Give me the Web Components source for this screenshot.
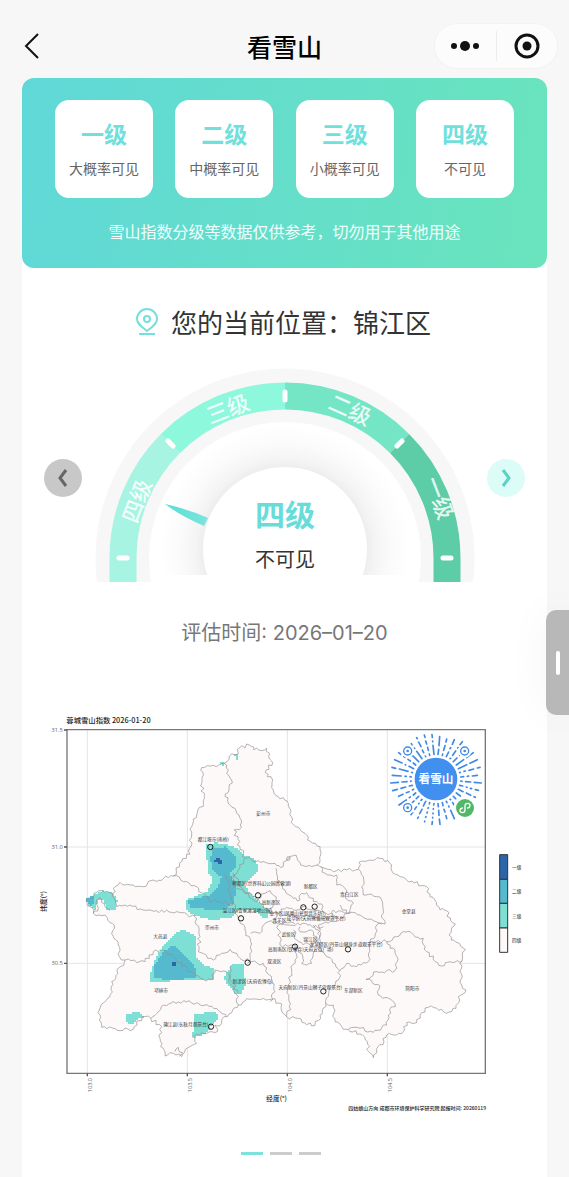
<!DOCTYPE html>
<html lang="zh-CN">
<head>
<meta charset="utf-8">
<meta name="viewport" content="width=device-width, initial-scale=1">
<title>看雪山</title>
<style>
  html, body { margin: 0; }
  body { background: #f7f7f7; font-family: "Noto Sans CJK SC", "Noto Sans", sans-serif; color: #333; }
</style>
</head>
<body>
<snow-app></snow-app>
<script>
const define = (name, html, setup) => {
  const template = document.createElement('template');
  template.innerHTML = html;
  customElements.define(name, class extends HTMLElement {
    constructor() {
      super();
      this.attachShadow({ mode: 'open' }).append(template.content.cloneNode(true));
    }
    connectedCallback() { if (setup) setup(this.shadowRoot, this); }
  });
};

/* Seeded generator, so that coastlines and code rays are stable between loads. */
const seeded = seed => () => {
  seed = (seed * 1103515245 + 12345) % 2147483648;
  return seed / 2147483648;
};

define('nav-bar', `
<style>
  :host { display: grid; grid-template-columns: 1fr auto 1fr; align-items: center; box-sizing: border-box; height: 78px; padding: 14px 11px 0; }
  button { border: 0; background: none; padding: 0; display: grid; place-items: center; cursor: pointer; }
  .back { width: 42px; height: 40px; }
  h1 { margin: 0; font-size: 25px; line-height: 38px; font-weight: 500; color: #000; }
  .capsule { justify-self: end; display: grid; grid-template-columns: 1fr 1px 1fr; align-items: center; width: 124px; height: 46px; border-radius: 24px; background: #fcfcfc; border: 1px solid #f3f3f3; box-sizing: border-box; }
  .capsule button { height: 44px; }
  .capsule i { height: 30px; background: #ececec; }
</style>
<button class="back" aria-label="返回"><svg width="20" height="30" viewBox="0 0 20 30" fill="none" stroke="#111" stroke-width="2"><path d="M16 3 4 15l12 12"/></svg></button>
<h1><slot></slot></h1>
<div class="capsule">
  <button aria-label="更多"><svg width="30" height="12" viewBox="0 0 30 12" fill="#111"><circle cx="4" cy="6" r="3"/><circle cx="15" cy="6" r="5"/><circle cx="26" cy="6" r="3"/></svg></button>
  <i></i>
  <button aria-label="关闭"><svg width="28" height="28" viewBox="0 0 28 28"><circle cx="14" cy="14" r="11" fill="none" stroke="#111" stroke-width="3"/><circle cx="14" cy="14" r="4.500" fill="#111"/></svg></button>
</div>`);

define('level-card', `
<style>
  :host { display: flex; flex-direction: column; align-items: center; box-sizing: border-box; width: 98px; height: 98px; padding-top: 15px; border-radius: 14px; background: #fff; }
  strong { font-size: 23px; line-height: 36px; font-weight: 700; color: #6fe0dc; }
  span { margin-top: 7px; font-size: 14px; line-height: 20px; color: #666; white-space: nowrap; }
</style>
<strong><slot name="level"></slot></strong><span><slot></slot></span>`);

define('level-banner', `
<style>
  :host { display: block; box-sizing: border-box; padding: 22px 33px 25px; border-radius: 12px; background: linear-gradient(98deg, #60d8d8, #69e4bc); }
  .row { display: flex; justify-content: space-between; }
  p { margin: 21px 0 0; font-size: 16px; line-height: 24px; text-align: center; color: #f0fffc; }
</style>
<div class="row"><slot></slot></div><p><slot name="note"></slot></p>`);

define('place-line', `
<style>
  :host { display: flex; align-items: center; justify-content: center; gap: 11px; }
  h2 { margin: 0; font-size: 26px; line-height: 36px; font-weight: 400; color: #333; }
</style>
<svg width="26" height="28" viewBox="0 0 26 28" fill="none" stroke="#74e0dc" stroke-width="2"><path d="M13 23C8 19 3 16 3 11a10 10 0 0 1 20 0c0 5-5 8-10 12Z"/><circle cx="13" cy="11" r="3"/><path d="M5 26h16"/></svg>
<h2><slot></slot></h2>`);

define('level-gauge', `
<style>
  :host { display: grid; grid-template-columns: 38px minmax(0, 380px) 38px; justify-content: space-between; align-items: center; padding: 0 22px; }
  button { width: 38px; height: 38px; border: 0; border-radius: 50%; padding: 0; display: grid; place-items: center; background: #c8c8c8; color: #666; margin-top: 6px; }
  .next { background: #dcfcf7; color: #5ad2c6; }
  svg { display: block; }
  .dial { width: 100%; }
  text { text-anchor: middle; }
  .band text { font-size: 22px; font-weight: 500; fill: #fff; fill-opacity: .85; }
</style>
<button aria-label="上一个"><svg width="14" height="20" viewBox="0 0 14 20" fill="none" stroke="currentColor" stroke-width="3"><path d="M10 2 4 10l6 8"/></svg></button>
<svg class="dial" viewBox="0 0 380 214">
  <defs>
    <radialGradient id="shade" gradientUnits="userSpaceOnUse" cx="190" cy="181" r="136">
      <stop offset=".58" stop-color="#ebebeb"/><stop offset=".66" stop-color="#f4f4f4"/><stop offset=".78" stop-color="#fbfbfb"/><stop offset=".92" stop-color="#fff"/>
    </radialGradient>
    <linearGradient id="needle"><stop offset="0" stop-color="#55e0d0"/><stop offset="1" stop-color="#7fe3e0"/></linearGradient>
    <clipPath id="cut"><path d="M0 0h380v214H0z"/></clipPath>
    <clipPath id="face"><path d="M0 0h380v207H0z"/></clipPath>
  </defs>
  <g clip-path="url(#cut)">
    <circle cx="190" cy="190" r="189.500" fill="#f7f7f7"/>
    <g fill="none" stroke-width="27" class="arcs">
      <path d="M28 214V190A162 162 0 0 1 75.450 75.450" stroke="#a6f4e1"/>
      <path d="M75.450 75.450A162 162 0 0 1 190 28" stroke="#8df8dc"/>
      <path d="M190 28A162 162 0 0 1 304.550 75.450" stroke="#74e6c5"/>
      <path d="M304.550 75.450A162 162 0 0 1 352 190V214" stroke="#5dcda8"/>
    </g>
    <circle cx="190" cy="190" r="136" fill="#fff"/>
  </g>
  <g clip-path="url(#face)">
    <circle cx="190" cy="190" r="134" fill="url(#shade)"/>
    <path d="M70 136q23 5 43 14l-4 8Q84 147 70 136z" fill="url(#needle)"/>
    <circle cx="190" cy="181" r="82" fill="#fff"/>
  </g>
  <g stroke="#fff" stroke-width="5" stroke-linecap="round">
    <path d="M24 190h8M348 190h8M190 24v8M73 73l5 5M307 73l-5 5"/>
  </g>
  <g class="band">
    <text transform="translate(42 133) rotate(-69)" y="8">四级</text>
    <text transform="translate(133 41) rotate(-21)" y="8">三级</text>
    <text transform="translate(255 42) rotate(24)" y="8">二级</text>
    <text transform="translate(344 130) rotate(69)" y="8">一级</text>
  </g>
  <text x="190" y="158" font-size="30" font-weight="700" fill="#67dcd8">四级</text>
  <text x="190" y="199" font-size="20" fill="#333">不可见</text>
</svg>
<button class="next" aria-label="下一个"><svg width="14" height="20" viewBox="0 0 14 20" fill="none" stroke="currentColor" stroke-width="3"><path d="m4 2 6 8-6 8"/></svg></button>`);

/* Map units are thirds of a pixel. Every outline is digitised on a tile; a tile is only an origin. */
const TILE = { nw: [90, 2100], ne: [840, 2100], sw: [90, 2700], se: [840, 2700], mid: [570, 2490] };
const pts = spec => {
  const out = [];
  let tile = TILE.nw;
  for (const word of spec.trim().split(/\s+/)) {
    if (TILE[word]) tile = TILE[word];
    else { const [x, y] = word.split(',').map(Number); out.push([x + tile[0], y + tile[1]]); }
  }
  return out;
};
const OUTLINE = `nw 515,203 550,196 582,190 598,168 615,165 630,142 658,135 672,150 710,145 716,170 728,188 708,210 712,230 728,240 730,270 745,290 775,310 ne 34,350 40,374 75,400 90,424 120,440 122,465 112,495
 135,505 160,515 200,510 235,508 237,487 260,483 300,475 335,495 340,520 380,540 440,560 450,590 465,600 480,630 se 500,32 512,62 526,72 513,98 513,120 540,132 556,150 545,182 545,255 558,270 535,290 528,325 500,340 485,328 445,322 420,345 410,368 380,368 370,395 350,405 320,405 312,425 294,440 280,473 266,455 262,425 240,402 205,388 185,380 165,365 160,315 137,310 115,362 95,378 55,355 20,350
 sw 765,345 755,312 725,298 700,295 660,298 625,315 605,338 582,350 575,370 555,376 562,395 545,395 530,400 487,410 500,430 480,440 455,470 430,460 405,468 392,440 390,415 395,380 362,355 345,350 320,365 310,388 285,384 270,392 215,382 208,330 240,290 245,245 285,180 268,170 265,135 250,110 252,75 240,68 225,45 190,40 180,20
 nw 168,600 215,572 248,580 255,560 270,547 340,560 370,540 430,528 448,490 480,462 485,380 500,345 520,310 515,250 520,225`;
const BORDERS = [
  'nw 582,190 605,240 585,290 620,340 634,382 612,390 630,440 645,475',
  'nw 645,475 700,485 735,490 752,503 780,470 ne 20,480 48,465 62,495 112,495',
  'nw 645,475 625,510 605,530 612,560 mid 130,130 150,170 210,220 240,250 265,250 260,280 330,285 400,290',
  'nw 585,520 598,560 608,615 570,605 535,600 500,560 470,545 430,528',
  'mid 140,175 165,190 200,215 225,190 240,182 258,212 240,235',
  'mid 258,115 262,150 285,180 310,205 330,210 335,190 350,188 370,215 395,222 400,245 430,255 445,265',
  'mid 392,110 405,130 440,135 440,165 465,175 465,200 490,220 480,250 430,240 425,260',
  'ne 235,508 250,530 245,560 250,585 290,590 305,600 310,640 se 305,45 315,72 290,75 285,110 270,125',
  'se 180,15 200,40 240,45 280,62 305,72',
  'se 200,40 160,65 115,75 118,140 135,165 180,212 200,190 230,200 265,185 268,140 270,125 320,125 370,95 430,115 440,155 485,198 510,185 548,182',
  'se 320,125 330,145 345,150 352,185 345,212 290,215 258,238 300,258 295,285 345,310 325,345 320,375 280,397 240,385 205,388',
  'se 180,212 175,240 155,260 137,310',
  'se 50,140 45,180 35,210 22,270 28,320 20,350',
  'sw 285,180 320,188 345,185 370,155 400,150 430,170 470,205 520,238 545,240 555,210 590,215 600,250 625,290 625,315',
  'nw 248,580 258,610 sw 260,20 300,15 340,30 380,32 440,35 495,50 510,110 505,155 550,180 575,160 600,148 630,175 665,185',
  'mid 130,220 145,265 165,300 182,335 185,365 172,400',
  'mid 182,310 210,310 235,275 270,280 315,282',
  'sw 665,185 700,190 712,220 725,230 735,275 720,305',
  'sw 362,355 400,315 430,305 500,308 560,325 590,350',
  'sw 605,195 600,235 625,280',
  'mid 265,285 270,345 310,345 335,370 335,400 365,400 370,370 390,345 385,300 370,285',
  'mid 310,300 320,330 340,345 370,340 380,320 365,300 330,305 330,290',
  'mid 265,250 290,232 320,240 345,228 370,240 400,245 405,262 440,258',
  'mid 270,262 300,255 330,265 360,258 400,268',
  'nw 190,640 205,625 200,600 215,598 225,620 240,632',
  'sw 435,455 445,442 458,458 448,468'
];
const HEAT = [
  ['#7edfd5', 'mid 215,225 240,240 235,265 215,260 190,240 150,240 130,260 70,270 30,262 0,250 -12,240 -12,210 50,185 70,150 55,130 50,80 50,45 75,38 110,42 150,60 165,75 200,90 203,125 185,145 165,165 185,195'],
  ['#7edfd5', 'nw 168,600 215,572 248,578 262,600 255,628 232,630 222,600 205,600 195,628 178,618'],
  ['#7edfd5', 'sw 435,100 460,90 495,105 500,175 520,195 553,205 550,238 500,240 420,243 362,248 362,220 375,180 395,145 420,115'],
  ['#7edfd5', 'sw 580,235 605,195 640,190 647,250 635,282 615,280'],
  ['#7edfd5', 'sw 288,345 320,333 342,350 320,360 310,375 298,372 288,360'],
  ['#7edfd5', 'sw 495,342 560,335 565,360 545,375 530,400 495,412 485,405 492,390'],
  ['#7edfd5', 'nw 612,165 624,165 624,178 618,178 618,170 612,170'],
  ['#7edfd5', 'nw 573,185 584,185 584,197 578,197 578,190 573,190'],
  ['#55bacd', 'mid 65,55 110,50 135,75 140,110 120,130 140,180 130,220 100,240 60,238 0,235 -5,212 60,195 85,170 95,140 70,125 62,90'],
  ['#55bacd', 'nw 168,598 190,586 192,608 182,616 172,608'],
  ['#55bacd', 'sw 432,133 470,170 497,205 497,235 410,240 370,230 375,195 400,155'],
  ['#2c66a8', 'mid 80,82 90,82 90,92 97,92 97,105 82,105 82,99 72,99 72,89 80,89'],
  ['#2c66a8', 'sw 426,187 438,187 438,201 426,201']
];
const LABELS = [
  ['nw', 700, 345, '彭州市'], ['nw', 550, 422, '都江堰市(南桥)'],
  ['mid', 215, 164, '郫都区(世界科幻公园菁蓉湖)'], ['mid', 362, 173, '新都区'], ['mid', 478, 199, '青白江区'],
  ['mid', 243, 222, '高新西区'], ['mid', 172, 245, '温江区(鲁家滩湿地公园)'], ['mid', 320, 256, '金牛区(凤凰山瓮型音乐坊)'],
  ['mid', 268, 276, '青羊区'], ['mid', 378, 271, '成华区(天府熊猫塔观景平台)'], ['mid', 66, 296, '崇州市'],
  ['mid', 296, 317, '武侯区'], ['mid', 361, 332, '锦江区'], ['mid', 468, 349, '龙泉驿区(丹景山健身步道观景平台)'],
  ['mid', 332, 364, '高新南区(铁像寺)天府五街广场)'], ['mid', 253, 398, '双流区'], ['mid', 188, 458, '新津区(天府农博岛)'],
  ['mid', 361, 476, '天府新区(丹景山狮子宫观景台)'], ['se', 220, 276, '东部新区'], ['se', 397, 269, '简阳市'],
  ['se', 386, 38, '金堂县'], ['sw', 391, 114, '大邑县'], ['sw', 393, 276, '邛崃市'], ['sw', 467, 378, '蒲江县(长秋月观景台)']
];
const SITES = 'nw 541,441 mid 204,196 340,232 374,230 153,265 315,350 474,358 173,398 400,484 sw 543,380';

const roughen = (points, closed, rand) => {
  const out = [];
  const n = closed ? points.length : points.length - 1;
  for (let i = 0; i < n; i++) {
    const [ax, ay] = points[i], [bx, by] = points[(i + 1) % points.length];
    const len = Math.hypot(bx - ax, by - ay) || 1, steps = Math.max(1, Math.round(len / 8));
    out.push([ax, ay]);
    for (let k = 1; k < steps; k++) {
      const t = k / steps, d = (rand() - .5) * 12;
      out.push([ax + (bx - ax) * t - (by - ay) / len * d, ay + (by - ay) * t + (bx - ax) / len * d]);
    }
  }
  if (!closed) out.push(points[points.length - 1]);
  return 'M' + out.map(p => p.map(Math.round).join(' ')).join('L') + (closed ? 'Z' : '');
};
const inside = (x, y, poly) => {
  let hit = false;
  for (let i = 0, j = poly.length - 1; i < poly.length; j = i++) {
    const [xi, yi] = poly[i], [xj, yj] = poly[j];
    if ((yi > y) !== (yj > y) && x < (xj - xi) * (y - yi) / (yj - yi) + xi) hit = !hit;
  }
  return hit;
};
/* Forecast cells are six units square, which gives the patches their stepped edges. */
const cells = poly => {
  const xs = poly.map(p => p[0]), ys = poly.map(p => p[1]), c = 6;
  let d = '';
  for (let y = Math.floor(Math.min(...ys) / c) * c; y < Math.max(...ys); y += c)
    for (let x = Math.floor(Math.min(...xs) / c) * c; x < Math.max(...xs); x += c)
      if (inside(x + c / 2, y + c / 2, poly)) d += `M${x} ${y}h${c}v${c}h-${c}z`;
  return d;
};

define('index-map', `
<style>
  :host { display: block; }
  svg { display: block; width: 100%; }
  text { fill: #222; }
  .label text { font-size: 14px; text-anchor: middle; fill: #333; }
  .tick text { font-size: 17px; fill: #666; font-family: "Open Sans", "Noto Sans", sans-serif; }
  .key text { font-size: 14px; }
</style>
<svg viewBox="66 2100 1575 1260" role="img" aria-label="蓉城雪山指数分布图">
  <g stroke="#e4e4e4" stroke-width="3"><path d="M262 2190v1030M562 2190v1030M862 2190v1030M1162 2190v1030M201 2541h1254M201 2890h1254"/></g>
  <path class="land" fill="#fdf9f9"/>
  <g class="heat" shape-rendering="crispEdges"></g>
  <g class="lines" fill="none" stroke="#938e90" stroke-width="2"></g>
  <path d="M201 2189h1255v1031H201z" fill="none" stroke="#777" stroke-width="4"/>
  <path d="M192 2190h9M192 2541h9M192 2890h9M262 3220v9M562 3220v9M862 3220v9M1162 3220v9" stroke="#555" stroke-width="4"/>
  <g class="sites" fill="none" stroke="#222" stroke-width="3"></g>
  <g class="label"></g>
  <g class="tick">
    <text x="188" y="2196" text-anchor="end">31.5</text><text x="188" y="2547" text-anchor="end">31.0</text><text x="188" y="2896" text-anchor="end">30.5</text>
    <text transform="translate(275 3277) rotate(-90)">103.0</text><text transform="translate(575 3277) rotate(-90)">103.5</text>
    <text transform="translate(875 3277) rotate(-90)">104.0</text><text transform="translate(1175 3277) rotate(-90)">104.5</text>
  </g>
  <text x="199" y="2168" font-size="22" font-weight="500">蓉城雪山指数 2026-01-20</text>
  <text x="830" y="3304" font-size="20" text-anchor="middle" font-weight="500">经度(°)</text>
  <text transform="translate(137 2704) rotate(-90)" font-size="20" text-anchor="middle" font-weight="500">纬度(°)</text>
  <text x="1458" y="3331" font-size="15" text-anchor="end" font-weight="500">四姑娘山方向 成都市环境保护科学研究院 起报时间: 20260119</text>
  <g stroke="#333" stroke-width="3">
    <path d="M1499 2564h24v74h-24z" fill="#2c66a8"/><path d="M1499 2638h24v72h-24z" fill="#55bacd"/>
    <path d="M1499 2710h24v74h-24z" fill="#7edfd5"/><path d="M1499 2784h24v73h-24z" fill="#fdf9f9"/>
  </g>
  <g class="key"><text x="1536" y="2606">一级</text><text x="1536" y="2680">二级</text><text x="1536" y="2753">三级</text><text x="1536" y="2827">四级</text></g>
  <g class="code" stroke="#4089e4" fill="none" stroke-width="5" stroke-linecap="round"></g>
  <g fill="#fff">
    <circle cx="1223" cy="2253" r="20"/><circle cx="1394" cy="2253" r="20"/><circle cx="1223" cy="2423" r="20"/>
  </g>
  <g fill="none" stroke="#4089e4" stroke-width="4">
    <circle cx="1223" cy="2253" r="12"/><circle cx="1394" cy="2253" r="12"/><circle cx="1223" cy="2423" r="12"/>
  </g>
  <g fill="#4089e4"><circle cx="1223" cy="2253" r="4"/><circle cx="1394" cy="2253" r="4"/><circle cx="1223" cy="2423" r="4"/></g>
  <circle cx="1308" cy="2337" r="64" fill="#418fee"/>
  <text x="1308" y="2349" font-size="35" font-weight="700" text-anchor="middle" style="fill:#fff">看雪山</text>
  <circle cx="1395" cy="2424" r="34" fill="#fff"/><circle cx="1395" cy="2424" r="27" fill="#52b867"/>
  <path d="M1387 2424c-9 2-10 14 0 14 5 0 8-3 8-8v-12c0-5 3-8 8-8 10 0 9 12 0 14" fill="none" stroke="#fff" stroke-width="4" stroke-linecap="round"/>
</svg>`, root => {
  const $ = s => root.querySelector(s);
  const rand = seeded(7);
  const land = roughen(pts(OUTLINE), true, rand);
  $('.land').setAttribute('d', land);
  $('.lines').innerHTML = `<path d="${land}"/>` + BORDERS.map(b => `<path d="${roughen(pts(b), false, rand)}"/>`).join('');
  $('.heat').innerHTML = HEAT.map(([fill, spec]) => `<path fill="${fill}" d="${cells(pts(spec))}"/>`).join('');
  $('.sites').innerHTML = pts(SITES).map(([x, y]) => `<circle cx="${x}" cy="${y}" r="8"/>`).join('');
  $('.label').innerHTML = LABELS.map(([t, x, y, s]) => `<text x="${x + TILE[t][0]}" y="${y + TILE[t][1]}">${s}</text>`).join('');
  let rays = '';
  for (let i = 0; i < 36; i++) {
    const a = (i * 10 + 5) * Math.PI / 180;
    let r = 74;
    while (r < 134) {
      const len = [1, 3, 8, 14, 26][Math.floor(rand() * 5)];
      const end = Math.min(r + len, 136);
      const at = q => Math.round(1308 + q * Math.cos(a)) + ' ' + Math.round(2337 + q * Math.sin(a));
      rays += `M${at(r)}L${at(end + 1)}`;
      r = end + 12;
    }
  }
  $('.code').innerHTML = `<path d="${rays}"/>`;
});

define('page-dots', `
<style>
  :host { display: flex; justify-content: center; gap: 7px; }
  button { width: 22px; height: 3px; border: 0; padding: 0; background: #ccc; }
  .on { background: #7de2dc; }
</style>
<button class="on" aria-label="第一页"></button><button aria-label="第二页"></button><button aria-label="第三页"></button>`);

define('side-handle', `
<style>
  :host { position: fixed; right: 0; top: 610px; }
  button { display: grid; place-items: center; width: 23px; height: 105px; border: 0; padding: 0; border-radius: 10px 0 0 10px; background: #b9b8b8; box-shadow: 0 0 40px rgba(0,0,0,.05); }
  i { width: 4px; height: 24px; border-radius: 2px; background: #fff; }
</style>
<button aria-label="展开侧栏"><i></i></button>`);

define('snow-app', `
<style>
  :host { display: flex; flex-direction: column; min-height: 100vh; }
  main { flex: 1; margin: 0 22px; background: linear-gradient(#f7f7f7 20px, #fff 20px); }
  place-line { margin-top: 36px; padding-right: 4px; }
  level-gauge { margin-top: 28px; }
  .time { margin: 36px 0 0; text-align: center; font-family: Inter, "Noto Sans CJK SC", sans-serif; font-size: 20px; line-height: 30px; color: #777; }
  index-map { margin-top: 52px; }
  page-dots { padding: 32px 8px 20px 0; }
</style>
<nav-bar>看雪山</nav-bar>
<main>
  <level-banner>
    <level-card><span slot="level">一级</span>大概率可见</level-card>
    <level-card><span slot="level">二级</span>中概率可见</level-card>
    <level-card><span slot="level">三级</span>小概率可见</level-card>
    <level-card><span slot="level">四级</span>不可见</level-card>
    <span slot="note">雪山指数分级等数据仅供参考，切勿用于其他用途</span>
  </level-banner>
  <place-line>您的当前位置：锦江区</place-line>
  <level-gauge></level-gauge>
  <p class="time">评估时间: 2026–01–20</p>
  <index-map></index-map>
  <page-dots></page-dots>
</main>
<side-handle></side-handle>`);
</script>
</body>
</html>
